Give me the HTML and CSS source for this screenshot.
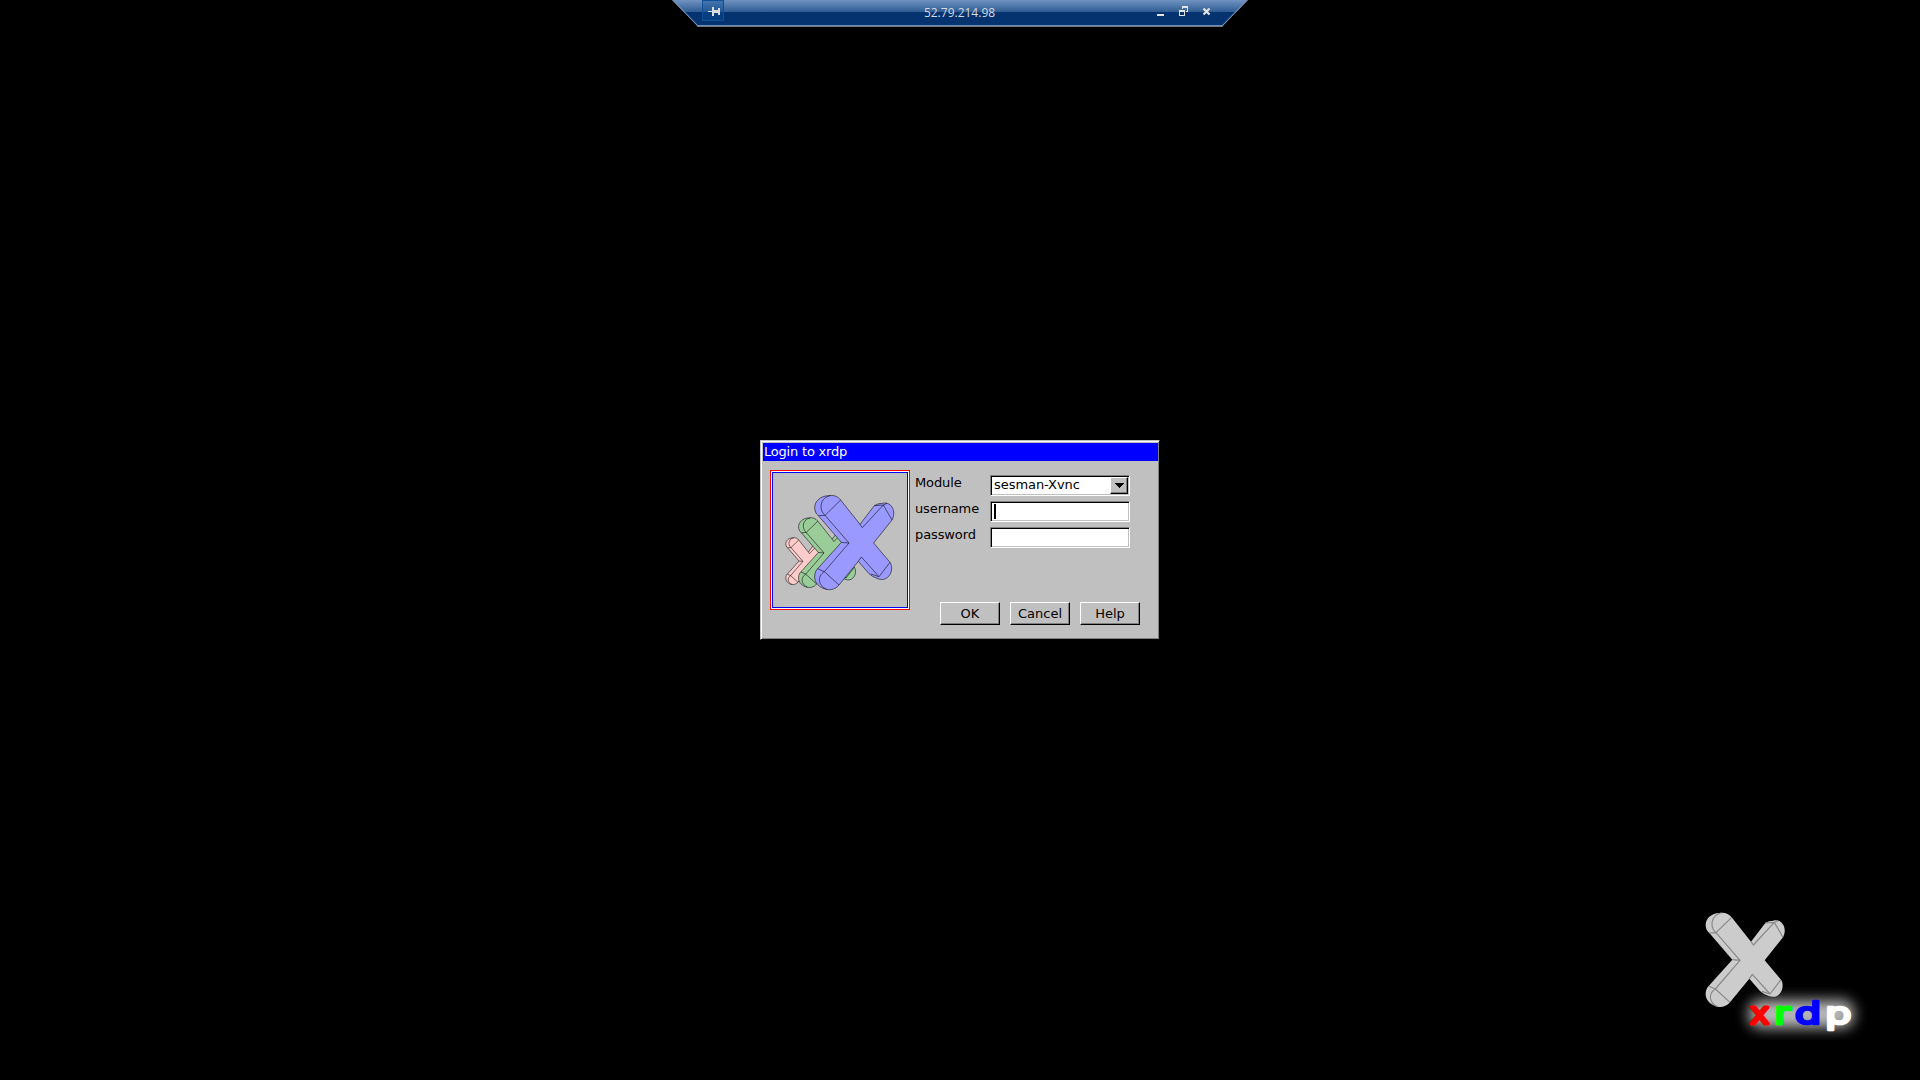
FILE: index.html
```html
<!DOCTYPE html>
<html lang="en">
<head>
<meta charset="utf-8">
<title>xrdp login</title>
<link rel="stylesheet" href="styles.css">
</head>
<body>
<svg class="defs" aria-hidden="true">
  <defs>
    <path id="x-body" d="M149 128C149 108 167 93 190 92C205 89 219 94 227 105L285 178L328 122Q338 115 352 115C362 112 370 115 377 121C388 132 389 150 381 165L326 234L375 292C383 303 381 324 371 334C362 344 351 345 341 342Q322 336 312 326L280 289L222 360C211 373 196 376 185 373C164 370 147 352 149 333C150 322 153 316 158 311L229 232L160 152C152 146 149 137 149 128Z"/>
    <path id="x-edges" d="M160 152L180 151L252 234L178 320L158 311M229 232L252 234M180 151L227 105M180 151C160 133 165 98 196 92M178 320L222 360M178 320C155 335 160 362 185 373M285 178L292 188L355 120L381 165M328 122L355 120L366 115M280 289L289 276L342 335L375 292M318 327L342 335"/>
  </defs>
</svg>
<main class="desktop">
  <header class="connection">
    <div class="pin">
      <svg viewBox="0 0 22 21" width="22" height="21" fill="#dedede" shape-rendering="crispEdges"><path d="M6 11h4v1h-4zM10 7h2v9h-2zM12 10h4v3h-4zM16 8h2v7h-2z"/></svg>
    </div>
    <span class="host">52.79.214.98</span>
    <svg class="controls" viewBox="0 0 56 12" width="56" height="12">
      <g fill="#e3e3e3" shape-rendering="crispEdges"><path d="M0 8h7v2H0z"/><path fill-rule="evenodd" d="M25 0h6v6h-2v-1h1V2h-4v1h-1zM22 4h6v6h-6zM23 6v3h4V6z"/></g>
      <path d="M46.500 2.500l6 6M52.500 2.500l-6 6" fill="none" stroke="#e3e3e3" stroke-width="2.200"/>
    </svg>
  </header>

  <form class="dialog">
    <h1 class="title">Login to xrdp</h1>
    <div class="content">
      <div class="picture">
        <svg viewBox="24 24 402 402" width="134" height="134">
          <g stroke="#000" stroke-opacity=".55" stroke-linejoin="round">
            <g transform="translate(-11.600 172.800) scale(.497)" stroke-width="6"><use href="#x-body" fill="#fcc"/><use href="#x-edges" fill="none"/></g>
            <g transform="translate(-9.500 90.700) scale(.74)" stroke-width="4"><use href="#x-body" fill="#9c9"/><use href="#x-edges" fill="none"/></g>
            <g stroke-width="3"><use href="#x-body" fill="#99f"/><use href="#x-edges" fill="none"/></g>
          </g>
        </svg>
      </div>
      <div class="fields">
        <div class="row"><span class="label">Module</span><div class="field combo"><span>sesman-Xvnc</span><span class="drop"><svg viewBox="0 0 9 5" width="9" height="5" shape-rendering="crispEdges"><path d="M0 0h9v1H8v1H7v1H6v1H5v1H4V4H3V3H2V2H1V1H0z"/></svg></span></div></div>
        <div class="row"><span class="label">username</span><div class="field"><i class="caret"></i></div></div>
        <div class="row"><span class="label">password</span><div class="field"></div></div>
      </div>
    </div>
    <div class="buttons">
      <button type="button">OK</button><button type="button">Cancel</button><button type="button">Help</button>
    </div>
  </form>

  <footer class="brand">
    <svg viewBox="0 0 600 420" width="200" height="140">
      <defs>
        <filter id="glow" filterUnits="userSpaceOnUse" x="60" y="190" width="540" height="230"><feGaussianBlur stdDeviation="21"/></filter>
      </defs>
      <rect x="176" y="300" width="316" height="84" rx="36" fill="#fff" opacity=".72" filter="url(#glow)"/>
      <g transform="translate(-102 -53)" stroke-linejoin="round"><use href="#x-body" fill="#ccc"/><use href="#x-edges" fill="none" stroke="#888" stroke-width="3.500"/></g>
      <g class="word">
        <text fill="red" stroke="red" transform="translate(179 372) scale(1.080 1)">x</text>
        <text fill="lime" stroke="lime" transform="translate(252 372) scale(1.300 1)">r</text>
        <text fill="blue" stroke="blue" transform="translate(314 372) scale(1.350 1)">d</text>
        <text fill="white" stroke="white" transform="translate(405 372) scale(1.350 1)">p</text>
      </g>
    </svg>
  </footer>
</main>
</body>
</html>
```
FILE: styles.css
```css
* { box-sizing: border-box; }
body { margin: 0; background: #000; }
.defs { display: none; }
.desktop {
  width: 1920px;
  height: 1080px;
  display: grid;
  grid-template-rows: 440px 200px 440px;
  justify-items: center;
  overflow: hidden;
}

.connection {
  position: relative;
  width: 576px;
  height: 27px;
  padding: 0 35px 0 30px;
  display: flex;
  justify-content: space-between;
  clip-path: polygon(0 0, 100% 0, calc(100% - 26px) 100%, 26px 100%);
  background: linear-gradient(#7093c2 0, #2e5c92 12px, #05336f 12px, #05336f 25px, #6c8fbd 25px, #6c8fbd 26px, #777 26px);
}
.connection::before,
.connection::after {
  content: "";
  position: absolute;
  top: 0;
  left: 0;
  width: 29px;
  height: 27px;
  background: #8295b3;
  clip-path: polygon(0 0, 1.5px 0, 27.5px 100%, 26px 100%);
}
.connection::after { left: auto; right: 0; transform: scaleX(-1); }
.pin { width: 22px; height: 21px; margin-right: 38px; background: #0b4f9866; box-shadow: inset 0 0 0 1px #0f5099; }
.pin svg { display: block; }
.host { font: 12px/26px "Open Sans", sans-serif; color: #d5dae2; }
.controls { margin-top: 6px; }

.dialog {
  width: 400px;
  height: 200px;
  background: #c0c0c0;
  border: 1px solid;
  border-color: #c0c0c0 #000 #000 #c0c0c0;
  box-shadow: inset 1px 1px #fff, inset -1px -1px #808080;
  padding: 2px 1px 0 2px;
  font: 13px/18px "DejaVu Sans", sans-serif;
  letter-spacing: -0.12px;
  color: #000;
}
.title { margin: 0; height: 18px; padding-left: 1px; background: #00f; color: #fff; font: inherit; letter-spacing: -0.2px; }
.content { display: flex; gap: 5px; padding: 9px 0 0 7px; }
.picture { width: 140px; height: 140px; border: 1px solid red; box-shadow: inset 0 0 0 1px #fff, inset 0 0 0 2px #00f; padding: 2px; }
.picture svg { display: block; }
.fields { padding-top: 5px; display: flex; flex-direction: column; gap: 5px; }
.row { display: flex; height: 21px; }
.label { width: 75px; line-height: 15px; }
.field {
  width: 140px;
  height: 21px;
  background: #fff;
  border: 1px solid;
  border-color: #808080 #fff #fff #808080;
  box-shadow: inset 1px 1px #000, inset -1px -1px #c0c0c0;
  padding: 2px 2px 0 3px;
}
.combo { display: flex; justify-content: space-between; padding: 1px 1px 0 3px; line-height: 16px; letter-spacing: -0.05px; }
.drop {
  width: 18px;
  height: 17px;
  background: #c0c0c0;
  border: 1px solid;
  border-color: #fff #000 #000 #fff;
  box-shadow: inset -1px -1px #808080;
  display: grid;
  place-items: center;
}
.drop svg { display: block; }
.caret { display: block; width: 2px; height: 15px; background: #000; }
.buttons { display: flex; gap: 10px; padding-left: 177px; margin-top: -8px; }
button {
  width: 60px;
  height: 23px;
  padding: 0;
  background: #c0c0c0;
  border: 1px solid;
  border-color: #fff #000 #000 #fff;
  box-shadow: inset -1px -1px #808080;
  border-radius: 0;
  font: 13px/21px "DejaVu Sans", sans-serif;
  color: #000;
}

.brand { justify-self: end; align-self: end; padding: 0 30px 40px 0; }
.brand svg { display: block; }
.word { font-family: "DejaVu Sans", sans-serif; font-size: 93px; stroke-width: 3.2px; stroke-linejoin: round; }
.word text { vector-effect: non-scaling-stroke; }
```
